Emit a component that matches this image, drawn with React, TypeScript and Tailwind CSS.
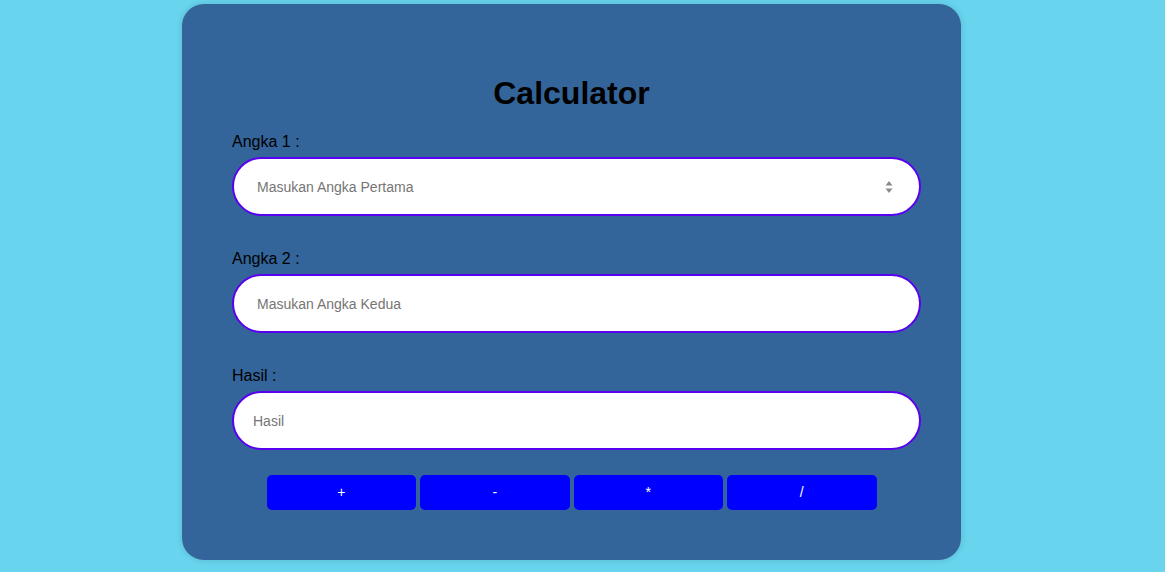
import React from 'react';

const Spinner = () => (
  <svg width="8" height="14" viewBox="0 0 8 14" className="absolute right-[28px] top-1/2 -translate-y-1/2">
    <path d="M4 1 L7.5 5.5 L0.5 5.5 Z" fill="#8a8a8a" />
    <path d="M4 13 L7.5 8.5 L0.5 8.5 Z" fill="#8a8a8a" />
  </svg>
);

const Field = ({
  label,
  placeholder,
  spinner,
  pad,
}: {
  label: string;
  placeholder: string;
  spinner?: boolean;
  pad: string;
}) => (
  <div className="flex flex-col">
    <label className="text-[16px] leading-[18px] text-black">{label}</label>
    <div className="relative mt-[6px] w-[689px]">
      <input
        type="text"
        placeholder={placeholder}
        className={`h-[59px] w-full rounded-full border-2 border-[#5a00f0] bg-white ${pad} text-[14px] text-black outline-none placeholder:text-[#757575]`}
      />
      {spinner && <Spinner />}
    </div>
  </div>
);

export default function App() {
  return (
    <div className="min-h-[572px] w-full bg-[#68d4ee] font-['Liberation_Sans',Arial,sans-serif]">
      <div className="pt-[4px] pl-[182px]">
        <div className="flex h-[556px] w-[779px] flex-col rounded-[22px] bg-[#33649a] pt-[71px] shadow-[0_0_6px_rgba(0,0,0,0.15)]">
          <h1 className="text-center text-[32px] font-bold leading-[36px] text-black">Calculator</h1>
          <div className="ml-[50px] mt-[22px] flex flex-col gap-[34px]">
            <Field label="Angka 1 :" placeholder="Masukan Angka Pertama" spinner pad="pl-[23px] pr-[40px]" />
            <Field label="Angka 2 :" placeholder="Masukan Angka Kedua" pad="pl-[23px]" />
            <Field label="Hasil :" placeholder="Hasil" pad="pl-[19px]" />
          </div>
          <div className="mt-[25px] flex justify-center gap-[4px]">
            {['+', '-', '*', '/'].map((op) => (
              <button
                key={op}
                className="h-[35px] w-[149.5px] rounded-[5px] bg-[#0000ff] text-[14px] text-white"
              >
                {op}
              </button>
            ))}
          </div>
        </div>
      </div>
    </div>
  );
}
